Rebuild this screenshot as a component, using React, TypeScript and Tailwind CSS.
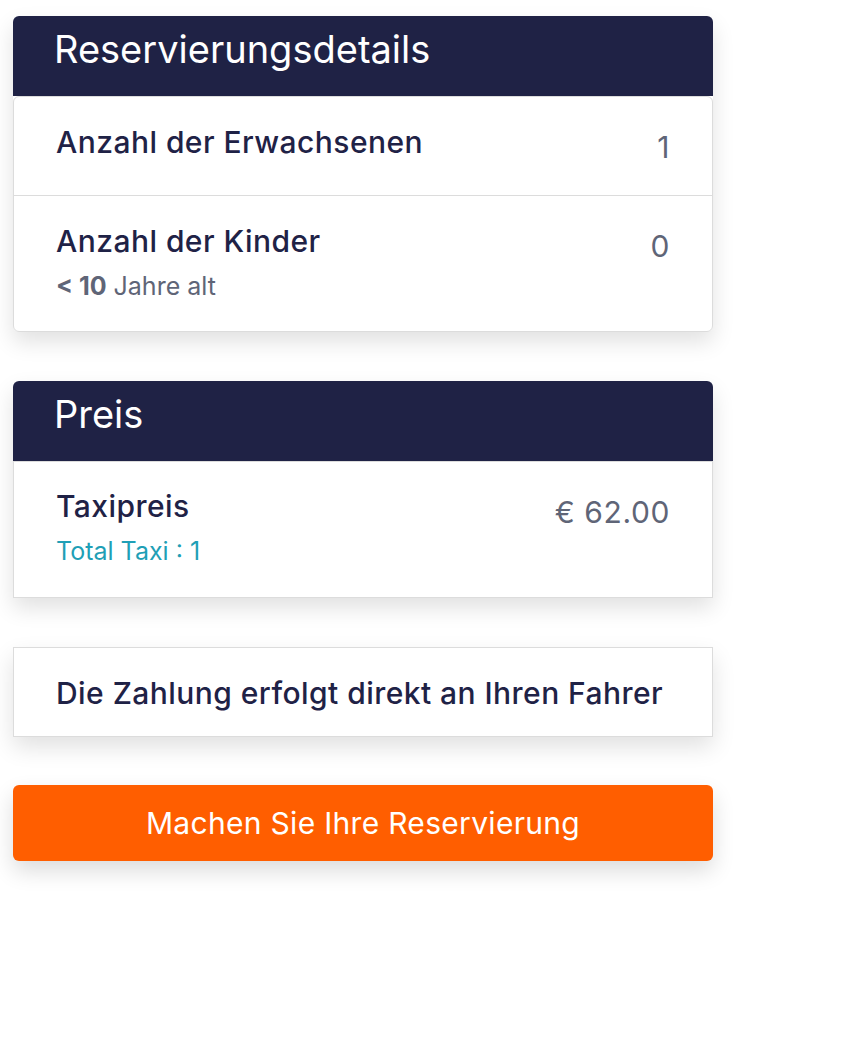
import React from 'react';

const font = { fontFamily: 'Inter, "Noto Sans", sans-serif' };

const App: React.FC = () => {
  return (
    <div className="min-h-screen bg-white pl-[13px] pt-[16px]" style={font}>
      <div className="w-[700px] flex flex-col">
        {/* Reservierungsdetails */}
        <div className="rounded-[6px] shadow-[0_10px_22px_rgba(0,0,0,0.12)]">
          <div className="h-[80px] rounded-t-[6px] bg-[#1f2245] pl-[41px] pt-[12px]">
            <h2 className="text-[38px] leading-[43px] text-white font-normal">Reservierungsdetails</h2>
          </div>
          <div className="rounded-[6px] border border-[#dcdcdc] bg-white">
            <div className="flex items-start justify-between border-b border-[#dcdcdc] px-[42px] pt-[27px] pb-[35px]">
              <p className="text-[30px] leading-[36px] font-medium tracking-[0.015em] text-[#1f2246]">Anzahl der Erwachsenen</p>
              <span className="translate-y-[5px] text-[30px] leading-[36px] tracking-[0.02em] text-[#5f6577]">1</span>
            </div>
            <div className="flex items-start justify-between px-[42px] pt-[27px] pb-[30px]">
              <div>
                <p className="text-[30px] leading-[36px] font-medium tracking-[0.015em] text-[#1f2246]">Anzahl der Kinder</p>
                <p className="mt-[12px] text-[25px] leading-[30px] text-[#5f6577]">
                  <span className="font-bold">&lt; 10</span> Jahre alt
                </p>
              </div>
              <span className="translate-y-[5px] text-[30px] leading-[36px] tracking-[0.02em] text-[#5f6577]">0</span>
            </div>
          </div>
        </div>

        {/* Preis */}
        <div className="mt-[49px] rounded-t-[6px] shadow-[0_10px_22px_rgba(0,0,0,0.12)]">
          <div className="h-[80px] rounded-t-[6px] bg-[#1f2245] pl-[41px] pt-[12px]">
            <h2 className="text-[38px] leading-[43px] text-white font-normal">Preis</h2>
          </div>
          <div className="flex items-start justify-between border border-[#dcdcdc] bg-white px-[42px] pt-[26px] pb-[31px]">
            <div>
              <p className="text-[30px] leading-[36px] font-medium tracking-[0.015em] text-[#1f2246]">Taxipreis</p>
              <p className="mt-[12px] text-[25px] leading-[30px] text-[#1f9fb6]">Total Taxi : 1</p>
            </div>
            <span className="translate-y-[6px] text-[30px] leading-[36px] tracking-[0.02em] text-[#5f6577]">€ 62.00</span>
          </div>
        </div>

        {/* Zahlung */}
        <div className="mt-[49px] border border-[#dcdcdc] bg-white px-[42px] pt-[27px] pb-[25px] shadow-[0_10px_22px_rgba(0,0,0,0.12)]">
          <p className="text-[30px] leading-[36px] font-medium tracking-[0.015em] text-[#1f2246]">Die Zahlung erfolgt direkt an Ihren Fahrer</p>
        </div>

        <button className="mt-[48px] flex h-[76px] w-full items-center justify-center rounded-[6px] bg-[#ff5e00] text-[30px] tracking-[0.01em] text-white shadow-[0_10px_22px_rgba(0,0,0,0.14)]">
          Machen Sie Ihre Reservierung
        </button>
      </div>
    </div>
  );
};

export default App;
